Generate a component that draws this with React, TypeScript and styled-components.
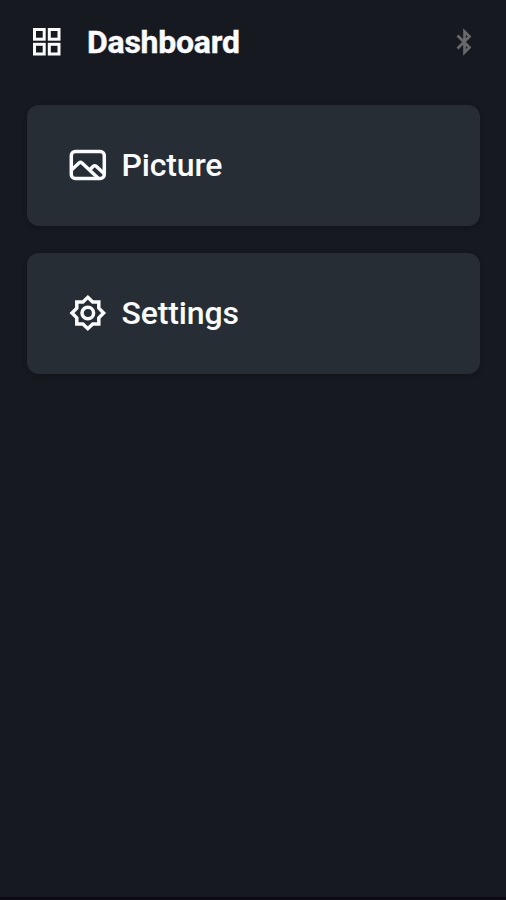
import React from "react";
import styled, { createGlobalStyle } from "styled-components";

const GlobalStyle = createGlobalStyle`
  * { box-sizing: border-box; }
  body { margin: 0; background: #161920; }
`;

const Screen = styled.div`
  width: 100%;
  height: 900px;
  display: flex;
  flex-direction: column;
  background: #161920;
  border-bottom: 3px solid #0d0916;
  color: #fafbfd;
  font-family: Roboto, sans-serif;
`;

const Header = styled.header`
  display: flex;
  align-items: center;
  height: 83px;
  padding: 0 32px 0 32px;
`;

const Title = styled.h1`
  flex: 1;
  margin: 0 0 0 25px;
  font-size: 32px;
  line-height: 40px;
  font-weight: 700;
  letter-spacing: -0.25px;
  -webkit-text-stroke: 0.4px currentColor;
`;

const CardList = styled.main`
  display: flex;
  flex-direction: column;
  gap: 27px;
  padding: 22px 26px 0 27px;
`;

const Card = styled.button`
  display: flex;
  align-items: center;
  gap: 14px;
  height: 121px;
  padding: 0 0 1px 41px;
  border: 0;
  border-radius: 12px;
  background: #262d35;
  box-shadow: 0 2px 5px rgba(14, 15, 18, 0.4);
  color: inherit;
  font-family: inherit;
`;

const CardLabel = styled.span`
  margin-left: -0.5px;
  font-size: 32px;
  line-height: 40px;
  font-weight: 500;
  letter-spacing: -0.15px;
`;

const Icon = styled.svg<{ $tone?: string }>`
  flex: none;
  display: block;
  fill: none;
  stroke: ${(p) => p.$tone ?? "#fafbfd"};
`;

const GridIcon = () => (
  <Icon width="30" height="30" strokeWidth="3" viewBox="0 0 30 30">
    <rect x="2.5" y="2.5" width="9.7" height="9.7" />
    <rect x="17.3" y="2.5" width="9.7" height="9.7" />
    <rect x="2.5" y="17.3" width="9.7" height="9.7" />
    <rect x="17.3" y="17.3" width="9.7" height="9.7" />
  </Icon>
);

const BluetoothIcon = () => (
  <Icon $tone="#68696c" width="20" height="30" strokeWidth="2.7" viewBox="0 0 20 30">
    <path d="M3.5 8.5 15.5 20.5 10.5 25.5V4.5L15.5 9.5 3.5 21.5" />
  </Icon>
);

const PictureIcon = () => (
  <Icon width="40" height="40" strokeWidth="3.5" strokeLinejoin="round" viewBox="0 0 40 40">
    <rect x="3.3" y="6.5" width="33" height="27" rx="4" />
    <path d="M4 24.5 11 18Q12.5 16.7 14 18L30 33M22 24.5 25 21.5Q26.7 20 28.5 21.5L36 28.5" />
  </Icon>
);

const SettingsIcon = () => (
  <Icon width="40" height="40" strokeWidth="3.5" strokeLinejoin="miter" viewBox="0 0 40 40">
    <path d="M19.8 4.3 24.7 9H30.8V15.1L35.6 20 30.8 24.9V31H24.7L19.8 35.7 14.9 31H8.8V24.9L4 20 8.8 15.1V9H14.9Z" />
    <circle cx="19.8" cy="20" r="5.8" />
  </Icon>
);

export default function App() {
  return (
    <Screen>
      <GlobalStyle />
      <Header>
        <GridIcon />
        <Title>Dashboard</Title>
        <BluetoothIcon />
      </Header>
      <CardList>
        <Card>
          <PictureIcon />
          <CardLabel>Picture</CardLabel>
        </Card>
        <Card>
          <SettingsIcon />
          <CardLabel>Settings</CardLabel>
        </Card>
      </CardList>
    </Screen>
  );
}
